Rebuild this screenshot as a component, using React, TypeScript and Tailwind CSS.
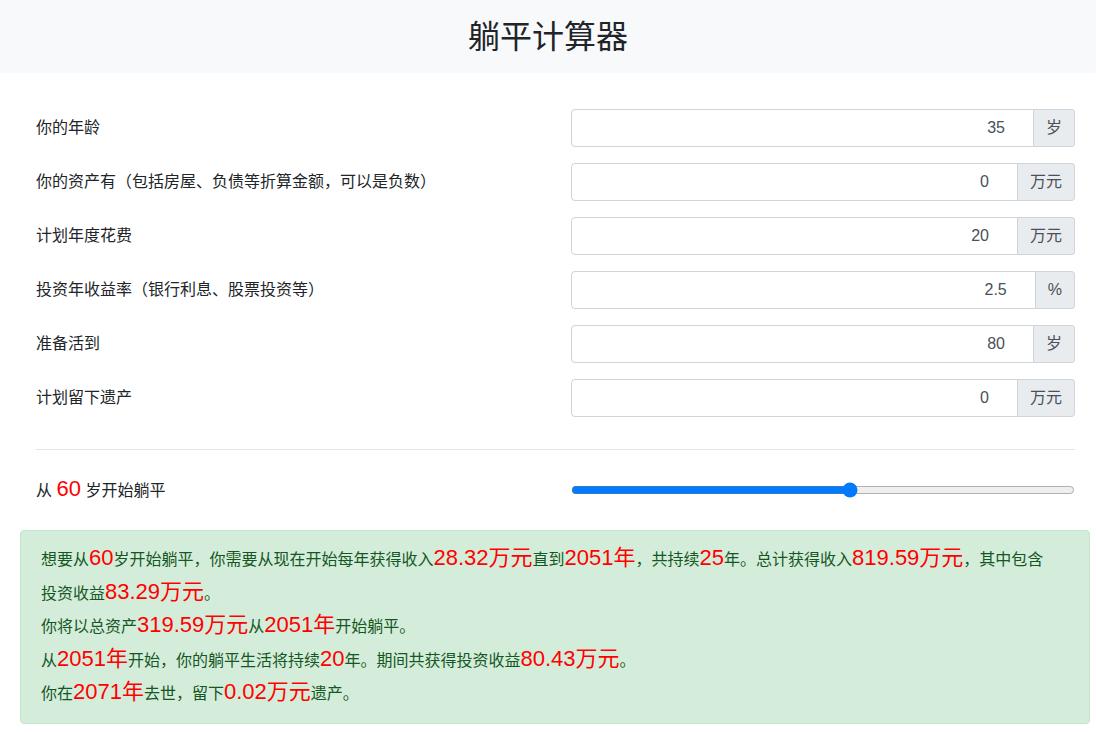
import { useState } from "react";

const font = "font-['Liberation_Sans','Noto_Sans_CJK_SC',sans-serif]";

const fields = [
  { label: "你的年龄", value: "35", unit: "岁" },
  { label: "你的资产有（包括房屋、负债等折算金额，可以是负数）", value: "0", unit: "万元" },
  { label: "计划年度花费", value: "20", unit: "万元" },
  { label: "投资年收益率（银行利息、股票投资等）", value: "2.5", unit: "%" },
  { label: "准备活到", value: "80", unit: "岁" },
  { label: "计划留下遗产", value: "0", unit: "万元" },
];

const Red = ({ children }: { children: React.ReactNode }) => (
  <span className="text-[22px] leading-none text-[#ff0000]">{children}</span>
);

export default function App() {
  const [age, setAge] = useState(60);

  return (
    <div className={`${font} bg-white text-[#212529] text-base leading-normal`}>
      <header className="h-[73px] bg-[#f8f9fa] flex items-center justify-center">
        <h1 className="text-[32px] font-normal leading-tight">躺平计算器</h1>
      </header>

      <main className="pl-[20px] pr-[6px] pb-[10px]">
        <div className="pl-[16px] pr-[15px] pt-[36px]">
          {fields.map((f) => (
            <div key={f.label} className="grid grid-cols-2 gap-x-[31px] items-center h-[38px] mb-[16px]">
              <label>{f.label}</label>
              <div className="flex h-[38px]">
                <input
                  type="text"
                  defaultValue={f.value}
                  className="flex-1 min-w-0 border border-[#ced4da] rounded-l-[4px] px-3 pr-[28px] text-right text-[#495057] outline-none"
                />
                <span className="flex items-center px-3 bg-[#e9ecef] border border-l-0 border-[#ced4da] rounded-r-[4px] text-[#495057]">
                  {f.unit}
                </span>
              </div>
            </div>
          ))}

          <hr className="mt-[32px] border-t border-black/10" />

          <div className="grid grid-cols-2 gap-x-[31px] items-center h-[38px] mt-[21px]">
            <label>
              从 <span className="text-[22px] leading-none text-[#ff0000]">{age}</span> 岁开始躺平
            </label>
            <input
              type="range"
              min={35}
              max={80}
              value={age}
              onChange={(e) => setAge(Number(e.target.value))}
              className="w-full accent-[#007bff]"
            />
          </div>
        </div>

        <div className="mt-[21px] border border-[#c3e6cb] bg-[#d4edda] rounded-[4px] px-5 py-3 text-[#155724] leading-[33.5px]">
          <p>
            想要从<Red>60</Red>岁开始躺平，你需要从现在开始每年获得收入<Red>28.32万元</Red>直到<Red>2051年</Red>，共持续<Red>25</Red>年。总计获得收入<Red>819.59万元</Red>，其中包含
            <br />
            投资收益<Red>83.29万元</Red>。
          </p>
          <p>
            你将以总资产<Red>319.59万元</Red>从<Red>2051年</Red>开始躺平。
          </p>
          <p>
            从<Red>2051年</Red>开始，你的躺平生活将持续<Red>20</Red>年。期间共获得投资收益<Red>80.43万元</Red>。
          </p>
          <p>
            你在<Red>2071年</Red>去世，留下<Red>0.02万元</Red>遗产。
          </p>
        </div>
      </main>
    </div>
  );
}
